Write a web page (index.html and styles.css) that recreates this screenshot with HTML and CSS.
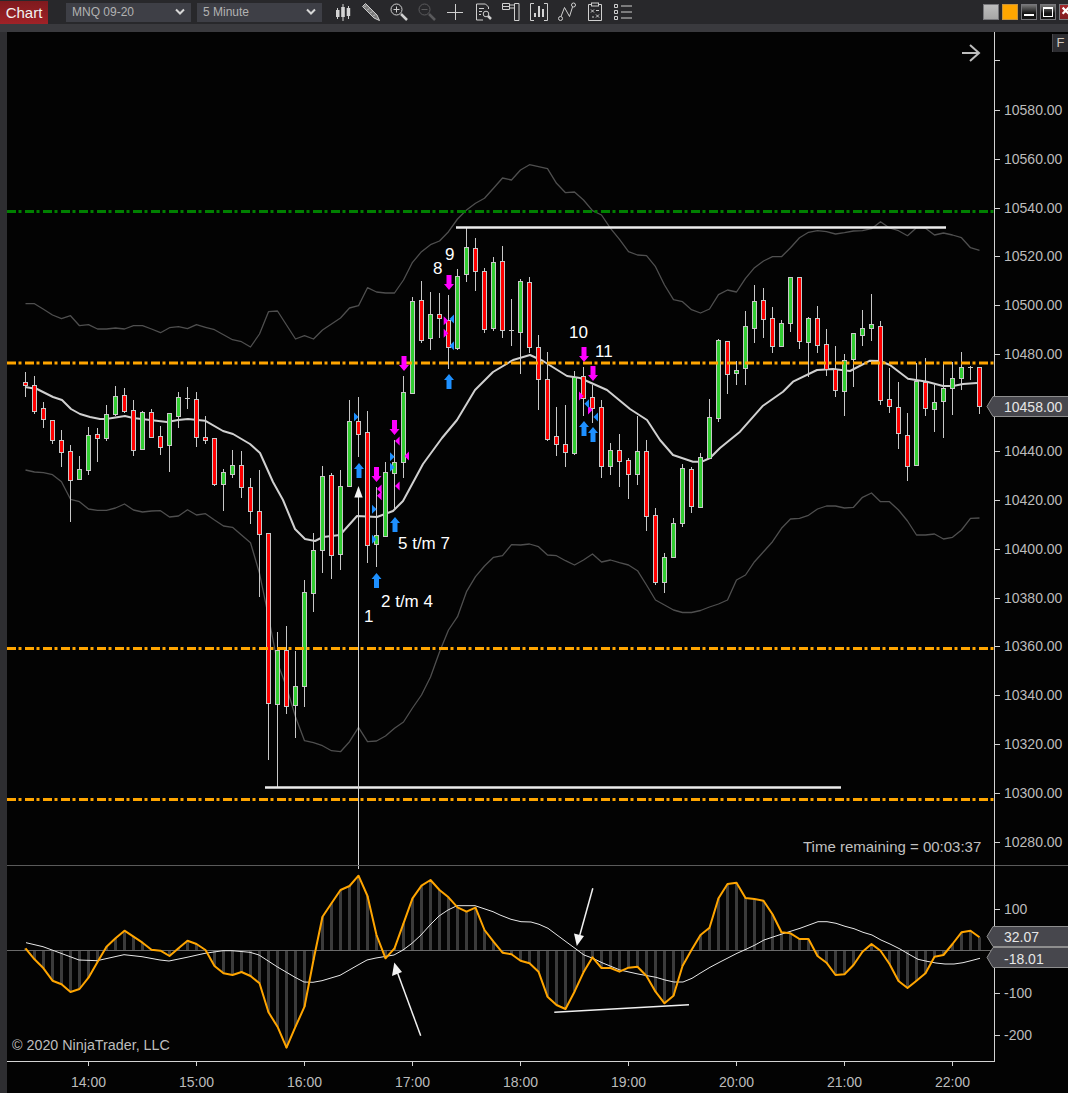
FILE: index.html
```html
<!DOCTYPE html>
<html lang="en">
<head>
<meta charset="UTF-8">
<meta name="viewport" content="width=device-width, initial-scale=1.0">
<title>Chart</title>
<link rel="stylesheet" href="styles.css">
</head>
<body>

<div class="toolbar">
    <div class="tab">Chart</div>
    <div class="picker">
        <span>MNQ 09-20</span>
        <svg width="10" height="8" viewBox="0 0 10 8"><polyline class="chevron" points="1,1.5 5,5.5 9,1.5"/></svg>
    </div>
    <div class="picker">
        <span>5 Minute</span>
        <svg width="10" height="8" viewBox="0 0 10 8"><polyline class="chevron" points="1,1.5 5,5.5 9,1.5"/></svg>
    </div>

    <div class="tools">
        <!-- candles -->
        <svg class="tool" viewBox="0 0 20 20">
            <path class="ink" d="M4.5 6v11M10 2v17M15.5 4v13"/>
            <rect class="solid" x="3" y="8" width="3.5" height="7"/>
            <rect class="solid" x="8.2" y="5" width="3.6" height="10"/>
            <rect class="solid" x="13.7" y="6" width="3.5" height="8"/>
        </svg>
        <!-- pencil -->
        <svg class="tool" viewBox="0 0 20 20">
            <path class="pencil" d="M1.5 4.5L4.5 1.5L16 13L18.5 18.5L13 16Z"/>
            <path class="ink" d="M5 3.5L3.500 5M8 6.5L6.5 8M11 9.5L9.5 11M14 12.5L12.5 14"/>
        </svg>
        <!-- zoom in -->
        <svg class="tool" viewBox="0 0 20 20">
            <circle class="ink" cx="7.5" cy="7.5" r="5.5"/>
            <path class="ink" d="M4.5 7.5h6M7.5 4.5v6"/>
            <path class="handle" d="M12 12L18 18"/>
        </svg>
        <!-- zoom out, disabled -->
        <svg class="tool off" viewBox="0 0 20 20">
            <circle class="ink" cx="7.5" cy="7.5" r="5.5"/>
            <path class="ink" d="M4.5 7.5h6"/>
            <path class="handle" d="M12 12L18 18"/>
        </svg>
        <!-- crosshair -->
        <svg class="tool" viewBox="0 0 20 20">
            <path class="ink" d="M2 10.5h16M10.5 2v16"/>
        </svg>
        <!-- doc and lens -->
        <svg class="tool" viewBox="0 0 20 20">
            <path class="ink" d="M15.5 7V5L12.5 2H3.5V18H10"/>
            <path class="ink" d="M6 6.5h5M6 9.5h3M6 12.5h2"/>
            <circle class="ink" cx="13" cy="12" r="2.8"/>
            <path class="handle" d="M15 14L18 17"/>
        </svg>
        <!-- data series tree -->
        <svg class="tool" viewBox="0 0 20 20">
            <path class="ink" d="M1.5 1.5h7v3h-7zM1.5 4.5h7v3h-7zM8.5 3h5M8.5 6h5"/>
            <path class="ink" d="M13.5 1.5h4.5v17h-4.500z"/>
        </svg>
        <!-- framed bars -->
        <svg class="tool" viewBox="0 0 20 20">
            <path class="ink" d="M5 1.5H1.5V18.5H5M15 1.5H18.5V18.5H15"/>
            <path class="solid-line" d="M6 15v-4M10 15V4M14 15V7"/>
        </svg>
        <!-- nodes -->
        <svg class="tool" viewBox="0 0 20 20">
            <path class="ink" d="M4 14.5L7.5 5.5L12.5 14.5L15.5 5"/>
            <circle class="ink" cx="3.5" cy="16.5" r="2"/>
            <circle class="ink" cx="16.5" cy="3" r="2"/>
        </svg>
        <!-- sheet -->
        <svg class="tool" viewBox="0 0 20 20">
            <path class="ink" d="M6 2.5H3.5V18.5H16.5V2.5H14"/>
            <rect class="ink" x="6.5" y="1" width="7" height="3"/>
            <path class="ink" d="M6 7.5l3 3M9 7.5l-3 3M11 12.5l3 3M14 12.5l-3 3M7 15h2M11 8.5h3"/>
        </svg>
        <!-- list -->
        <svg class="tool" viewBox="0 0 20 20">
            <path class="ink" d="M1.5 2.5h3v3h-3zM1.5 8.5h3v3h-3zM1.5 14.5h3v3h-3zM8 4h11M8 10h11M8 16h11"/>
        </svg>
    </div>

    <div class="window-btns">
        <div class="win win-grey"></div>
        <div class="win win-orange"></div>
        <div class="win win-dark"><span class="win-min"></span></div>
        <div class="win win-dark"><span class="win-max"></span></div>
        <div class="win win-close">
            <svg width="16" height="16" viewBox="0 0 16 16"><path class="close-x" d="M3 3L10 10M10 3L3 10"/></svg>
        </div>
    </div>
</div>

<div class="strip"></div>

<div class="main">
    <div class="gutter"></div>
    <div class="panel">
        <svg id="chart" width="1061" height="1061" viewBox="7 32 1061 1061"></svg>
        <div class="flag">F</div>
    </div>
</div>

<script src="chart.js"></script>

</body>
</html>
```

FILE: styles.css
```css
html, body {
    margin: 0;
    padding: 0;
    height: 100%;
    overflow: hidden;
    background-color: #2e2e31;
    font-family: "Liberation Sans", Arial, sans-serif;
}

.toolbar {
    display: flex;
    align-items: center;
    height: 24px;
    background-color: #28282b;
    overflow: hidden;
}

.tab {
    flex: none;
    width: 48px;
    height: 23px;
    margin-top: 1px;
    line-height: 24px;
    text-align: center;
    font-size: 15px;
    color: #f2f2f2;
    background: linear-gradient(#7e1a1e, #a02227);
}

.picker {
    flex: none;
    display: flex;
    align-items: center;
    justify-content: space-between;
    box-sizing: border-box;
    width: 125px;
    height: 19px;
    margin-left: 6px;
    padding: 0 6px;
    font-size: 12px;
    color: #b2b2b2;
    background-color: #3e3f46;
}

.tab + .picker {
    margin-left: 18px;
}

.chevron {
    fill: none;
    stroke: #d6d6d6;
    stroke-width: 2;
}

.tools {
    display: flex;
    gap: 8px;
    margin-left: 11px;
}

.tool {
    flex: none;
    width: 20px;
    height: 20px;
}

.ink {
    fill: none;
    stroke: #cfcfcf;
    stroke-width: 1;
}

.pencil {
    fill: #7c7c7c;
    stroke: #cfcfcf;
    stroke-width: 1;
}

.solid {
    fill: #d4d4d4;
}

.solid-line {
    fill: none;
    stroke: #d4d4d4;
    stroke-width: 2;
}

.handle {
    fill: none;
    stroke: #cfcfcf;
    stroke-width: 2.5;
}

.off .ink, .off .handle {
    stroke: #5a5a5c;
}

.window-btns {
    display: flex;
    gap: 3px;
    margin-left: auto;
    margin-right: -7px;
}

.win {
    flex: none;
    display: flex;
    align-items: center;
    justify-content: center;
    box-sizing: border-box;
    width: 16px;
    height: 16px;
    border: 1px solid #77777b;
}

.win-grey {
    background: linear-gradient(#bdbdbd, #a6a6a6);
}

.win-orange {
    background-color: #ffa600;
    border-color: #c8933a;
}

.win-dark {
    background: linear-gradient(#777, #141414 60%);
}

.win-min {
    width: 10px;
    height: 2px;
    margin-top: 6px;
    background-color: #fff;
}

.win-max {
    box-sizing: border-box;
    width: 10px;
    height: 10px;
    border: 1px solid #fff;
    border-top-width: 2px;
}

.win-close {
    background: linear-gradient(#a5282c, #7f1d21);
    justify-content: flex-start;
}

.close-x {
    fill: none;
    stroke: #fff;
    stroke-width: 2.5;
}

.strip {
    height: 8px;
    background-color: #3a3a3e;
}

.main {
    display: flex;
    height: 1061px;
}

.gutter {
    flex: none;
    width: 7px;
    background-color: #2e2e31;
}

.panel {
    position: relative;
    flex: none;
    width: 1061px;
    height: 1061px;
    background-color: #030303;
}

#chart {
    display: block;
}

.flag {
    position: absolute;
    top: 2px;
    right: 0;
    width: 15px;
    height: 18px;
    line-height: 18px;
    text-align: center;
    font-size: 13px;
    color: #cfc6bc;
    background-color: #2d2d31;
    border-left: 1px solid #4a4a4e;
}

/* chart parts */
.axis {
    stroke: #d2d2d2;
    stroke-width: 1;
    shape-rendering: crispEdges;
}

.split {
    stroke: #5a5a5a;
    stroke-width: 1;
    shape-rendering: crispEdges;
}

.zero {
    stroke: #6a6a6a;
    stroke-width: 1;
    shape-rendering: crispEdges;
}

.band {
    fill: none;
    stroke: #4f4f4f;
    stroke-width: 1.3;
    stroke-linejoin: round;
}

.mid {
    fill: none;
    stroke: #d0d0d0;
    stroke-width: 2;
    stroke-linejoin: round;
}

.macd {
    fill: none;
    stroke: #ffa500;
    stroke-width: 2;
    stroke-linejoin: round;
}

.signal {
    fill: none;
    stroke: #e8e8e8;
    stroke-width: 1;
    stroke-linejoin: round;
}

.hist {
    fill: #3b3b3b;
}

.wick {
    fill: #c8c8c8;
}

.body-up, .body-down {
    stroke: #c8c8c8;
    stroke-width: 1;
}

.body-up {
    fill: #32cd32;
}

.body-down {
    fill: #ff0000;
}

.level {
    fill: none;
    stroke-width: 3;
    stroke-dasharray: 9 2.5 3 3.5;
}

.level-orange {
    stroke: #ffa500;
}

.level-green {
    stroke: #008000;
}

.drawn {
    stroke: #ececec;
    stroke-width: 2.5;
}

.thin {
    stroke: #f0f0f0;
    stroke-width: 1.5;
}

.head {
    fill: #f4f4f4;
}

.blue {
    fill: #1e90ff;
}

.pink {
    fill: #ff00ff;
}

.price, .clock, .note, .stamp, .remain, .tag {
    font-family: "Liberation Sans", Arial, sans-serif;
    font-size: 14px;
}

.price, .clock {
    fill: #bcbcbc;
}

.clock {
    text-anchor: middle;
}

.stamp {
    font-size: 14.3px;
    fill: #bdbdbd;
}

.remain {
    font-size: 15px;
    fill: #c0c0c0;
}

.note {
    font-size: 17px;
    fill: #ffffff;
}

.tag {
    fill: #e6e6e6;
}

.tag-box {
    fill: #47474d;
    stroke: #8e8e8e;
    stroke-width: 1;
}

.next {
    fill: none;
    stroke: #bdbdbd;
    stroke-width: 2;
}
```

FILE: chart.js
```javascript
const svg = document.getElementById("chart");
const NS = "http://www.w3.org/2000/svg";

function add(tag, attrs, text) {
    let el = document.createElementNS(NS, tag);
    for (let key in attrs) {
        el.setAttribute(key, attrs[key]);
    }
    if (text !== undefined) {
        el.textContent = text;
    }
    svg.appendChild(el);
    return el;
}

function barX(k) {
    return 25.5 + 9 * k;
}

function line(x1, y1, x2, y2, cls) {
    add("line", { x1: x1, y1: y1, x2: x2, y2: y2, class: cls });
}

function polyline(points, cls) {
    add("polyline", { points: points.map(p => p.join(",")).join(" "), class: cls });
}

function barSeries(ys) {
    return ys.map((y, k) => [barX(k), y]);
}

// wick top, body top, body bottom, wick bottom, direction
const candles = [
    [372, 382, 385, 397, "d"], [376, 385, 411, 414, "d"], [402, 408, 419, 428, "d"], [420, 420, 440, 444, "d"],
    [430, 440, 452, 467, "d"], [445, 451, 480, 522, "d"], [456, 469, 479, 479, "u"], [427, 435, 470, 475, "u"],
    [428, 434, 438, 462, "d"], [405, 414, 438, 441, "u"], [386, 396, 414, 416, "u"], [388, 395, 411, 413, "d"],
    [400, 410, 450, 456, "d"], [411, 412, 449, 450, "u"], [409, 412, 437, 438, "d"], [426, 436, 447, 455, "d"],
    [413, 413, 445, 472, "u"], [392, 397, 416, 428, "u"], [387, 398, 399, 409, "l"], [392, 399, 437, 447, "d"],
    [416, 437, 440, 444, "d"], [438, 438, 484, 486, "d"], [469, 472, 484, 511, "u"], [450, 465, 474, 478, "u"],
    [451, 465, 487, 498, "d"], [478, 487, 511, 524, "d"], [470, 511, 534, 597, "d"], [533, 533, 703, 760, "d"],
    [632, 650, 704, 788, "u"], [626, 650, 706, 714, "d"], [651, 686, 705, 738, "u"], [580, 592, 686, 707, "u"],
    [533, 550, 593, 612, "u"], [466, 476, 550, 573, "u"], [473, 475, 555, 579, "d"], [470, 486, 554, 570, "u"],
    [400, 421, 486, 486, "u"], [397, 421, 434, 457, "d"], [411, 432, 545, 563, "d"], [487, 535, 544, 567, "u"],
    [462, 472, 536, 536, "u"], [440, 462, 473, 510, "u"], [376, 392, 462, 478, "u"], [297, 301, 393, 393, "u"],
    [281, 300, 340, 343, "d"], [292, 314, 338, 350, "u"], [293, 314, 318, 338, "d"], [295, 320, 347, 369, "d"],
    [269, 276, 348, 350, "u"], [228, 247, 274, 282, "u"], [238, 248, 271, 291, "d"], [268, 271, 329, 333, "d"],
    [257, 262, 328, 331, "u"], [246, 261, 330, 338, "d"], [299, 330, 332, 346, "l"], [279, 281, 332, 374, "u"],
    [277, 282, 347, 353, "d"], [335, 347, 379, 410, "d"], [352, 379, 439, 441, "d"], [407, 436, 444, 456, "d"],
    [405, 444, 452, 467, "d"], [371, 377, 453, 455, "u"], [367, 376, 398, 416, "d"], [385, 397, 408, 423, "d"],
    [400, 407, 466, 478, "d"], [443, 450, 466, 475, "u"], [434, 450, 461, 487, "d"], [458, 460, 474, 499, "d"],
    [416, 451, 474, 485, "u"], [440, 451, 516, 531, "d"], [508, 515, 582, 585, "d"], [553, 557, 582, 593, "u"],
    [518, 523, 557, 558, "u"], [464, 468, 523, 527, "u"], [467, 469, 506, 513, "d"], [453, 457, 507, 507, "u"],
    [399, 417, 458, 458, "u"], [339, 340, 418, 422, "u"], [341, 341, 374, 394, "d"], [361, 370, 373, 385, "u"],
    [311, 326, 368, 385, "u"], [285, 301, 328, 343, "u"], [288, 300, 319, 338, "d"], [307, 318, 346, 353, "d"],
    [320, 323, 346, 347, "u"], [277, 277, 323, 332, "u"], [277, 277, 341, 349, "d"], [317, 318, 342, 377, "u"],
    [306, 318, 345, 353, "d"], [329, 344, 369, 376, "d"], [346, 369, 390, 397, "d"], [354, 360, 391, 416, "u"],
    [333, 333, 359, 387, "u"], [310, 328, 335, 346, "u"], [294, 324, 328, 341, "u"], [321, 326, 400, 405, "d"],
    [368, 399, 406, 413, "d"], [382, 407, 433, 449, "d"], [413, 435, 466, 481, "d"], [363, 381, 465, 466, "u"],
    [358, 382, 408, 416, "d"], [385, 402, 409, 432, "u"], [364, 388, 401, 438, "u"], [362, 378, 388, 415, "u"],
    [352, 367, 378, 390, "u"], [366, 367, 368, 380, "l"], [367, 367, 406, 414, "d"]
];

const upper = [
    303.7, 303.7, 309.3, 315, 318.7, 315.7, 325.7, 324.7, 329, 329, 328, 329, 325.7, 325.7, 329, 332.7, 327.7, 326.7,
    328.7, 324.7, 327.3, 329.7, 334.7, 339.7, 341.7, 347, 334, 311.7, 311, 325, 339, 335.7, 339, 330, 324, 318, 308,
    305.7, 287.7, 292, 293, 293, 280, 262.3, 251.7, 244.7, 241, 231.7, 219, 210, 203.3, 198.3, 188.3, 178, 180, 170,
    164.7, 166.7, 168.7, 183.3, 192.7, 192, 200, 210.7, 215, 228.3, 239.3, 251.7, 255, 255.7, 266.7, 285, 299.7, 301.7,
    309.7, 313, 309, 294.7, 290, 292, 278.3, 267.7, 261, 256.7, 256.7, 247.7, 237.7, 232.3, 230.7, 231.7, 234, 232.7,
    231, 230.7, 228.7, 221.7, 228, 230.7, 235.7, 227.7, 228.3, 235, 233, 235, 237.7, 247.7, 250.3
];

const lower = [
    470, 472, 472.7, 474.7, 481.7, 499.3, 501.7, 509, 510.3, 510.3, 508, 504, 510, 512, 511, 510.7, 517, 516, 509.7,
    515, 513.7, 520, 526, 527.3, 535, 542.7, 573.3, 616.7, 663, 687, 716.7, 740.7, 742.7, 745.7, 750.7, 751.7, 741.7,
    727.3, 741.7, 741, 736, 728.3, 722, 708, 695, 677, 652, 630, 616.7, 591.7, 576.7, 566, 557.3, 555.7, 544.7, 545,
    544, 546.7, 555, 555.7, 560.7, 565, 560, 554, 562, 560, 562.7, 565, 570.7, 585, 600, 605, 610, 612.5, 612.5, 610.5,
    607, 604, 600, 580, 575, 561.7, 551.7, 541.7, 528.3, 519, 518.3, 515.3, 509, 506, 506, 508, 507.3, 497.3, 493,
    501.7, 501.7, 510, 521, 535, 535, 534, 539, 537.3, 530, 518.3, 518
];

const mid = [
    [25, 387], [37, 389], [53, 397], [62, 400], [71, 409], [80, 414], [90, 417], [100, 419], [106, 419], [125, 416],
    [133, 418], [150, 420], [167, 422], [178, 420], [188, 419], [205, 420.7], [223, 431], [233, 434], [250, 444],
    [260, 453], [273, 482], [283, 500], [295, 529], [305, 539], [315, 541], [323, 537], [340, 535], [357, 516],
    [377, 517], [393, 511], [403, 501], [423, 464], [442, 438], [457, 420], [475, 390], [493, 372], [513, 360],
    [530, 355], [543, 361], [567, 376], [580, 378], [607, 390], [620, 400.7], [630, 409], [647, 420], [660, 440],
    [673, 455], [693, 461.7], [702, 461.7], [710, 458], [720, 448], [740, 431.7], [763, 405.7], [783, 391.7],
    [793, 381.7], [817, 370], [833, 369], [850, 371], [870, 360.7], [880, 361], [890, 365], [908, 378.7],
    [927, 381.7], [943, 386], [953, 386], [963, 384], [977, 383]
];

const macd = [
    948.3, 959.3, 968.3, 980.7, 984.3, 992, 989, 977.7, 962, 946.7, 938.3, 930.7, 936.7, 942.7, 949.7, 950.7, 956,
    948.3, 940.7, 944, 950, 966, 973.3, 975, 972, 976, 983.3, 1012.3, 1026.7, 1047.7, 1026.7, 1006.7, 960, 916.7,
    903.3, 890, 886, 875.7, 896, 935, 958.3, 948.3, 923.3, 898.3, 885.7, 880, 890, 897.3, 907.3, 911.7, 907.7, 930,
    941.7, 952.7, 954.3, 960.7, 963.3, 971.7, 996.7, 1005, 1009, 991.7, 972.3, 957.3, 968, 968, 971.7, 967.7, 966.7,
    976, 991.7, 1003.3, 995.7, 966, 950, 935, 927.7, 898.3, 884, 882.7, 898, 899, 900.7, 914.3, 932.3, 933.3, 939,
    939, 956, 962.7, 975, 974.3, 965, 951.7, 944, 950.7, 964, 981, 988, 980.7, 973.3, 956.7, 955, 944, 932.3, 930.7,
    937.3
];

const signal = [
    [26, 942.7], [43, 946.7], [61, 953.3], [79, 960], [97, 960.7], [115, 956.7], [124, 954.7], [142, 956.7], [160, 960],
    [169, 961], [187, 957.3], [205, 953.3], [223, 950.7], [232, 950.7], [250, 952.3], [259, 955], [277, 966.7],
    [295, 977.3], [304, 982], [313, 982.3], [322, 980.7], [340, 975.3], [358, 965], [367, 960], [376, 958], [394, 955],
    [403, 950], [412, 943.3], [421, 935], [430, 925], [439, 916], [448, 910], [457, 905.7], [475, 905.7], [493, 911.7],
    [500, 915], [511, 919.3], [521, 921.7], [531, 922], [539, 924.3], [548, 928.3], [557, 935], [566, 941.7],
    [575, 948.3], [584, 955], [593, 958.3], [602, 962.7], [620, 970], [638, 974], [656, 977.3], [665, 980], [674, 982],
    [683, 982], [692, 978.3], [701, 972.7], [710, 967.3], [720, 962], [737, 953.3], [746, 949.3], [755, 945], [764, 940],
    [782, 934], [800, 928.3], [809, 925], [818, 921.7], [827, 921.7], [836, 923.3], [845, 926.3], [854, 928.7],
    [863, 932.3], [872, 935], [881, 940], [890, 944], [900, 949], [909, 954.3], [918, 959.3], [927, 961.3], [936, 963],
    [945, 964], [954, 964], [963, 962.7], [971, 960.7], [980, 958.3]
];

// bands and average go under the candles
polyline(barSeries(upper), "band");
polyline(barSeries(lower), "band");
polyline(mid, "mid");

candles.forEach(function(c, k) {
    let x = 25 + 9 * k;
    add("rect", { x: x, y: c[0], width: 1, height: c[3] - c[0], class: "wick" });
    let cls = c[4] === "d" ? "body-down" : "body-up";
    if (c[4] === "l") {
        add("rect", { x: x - 2, y: c[1], width: 5, height: 1, class: "wick" });
    } else {
        add("rect", { x: x - 1.5, y: c[1] + 0.5, width: 4, height: c[2] - c[1], class: cls });
    }
});

// levels
[363, 648.5, 799.5].forEach(function(y) {
    line(7, y, 994, y, "level level-orange");
});
line(7, 211.5, 994, 211.5, "level level-green");

// drawn lines
line(456, 227.5, 946, 227.5, "drawn");
line(265, 787.5, 841, 787.5, "drawn");

// entry marker
line(358.5, 495, 358.5, 869, "axis");
add("polygon", { points: "358.5,486 362.7,497.5 354.3,497.5", class: "head" });

// arrows: [x, top]
function upArrow(x, t) {
    let p = [[x, t], [x + 5, t + 6], [x + 2.5, t + 6], [x + 2.5, t + 15], [x - 2.5, t + 15], [x - 2.5, t + 6], [x - 5, t + 6]];
    add("polygon", { points: p.map(q => q.join(",")).join(" "), class: "blue" });
}

function downArrow(x, t) {
    let p = [[x - 2.5, t], [x + 2.5, t], [x + 2.5, t + 9], [x + 5, t + 9], [x, t + 15], [x - 5, t + 9], [x - 2.5, t + 9]];
    add("polygon", { points: p.map(q => q.join(",")).join(" "), class: "pink" });
}

[[359, 463], [376.5, 573], [395, 517], [449, 374], [584, 421], [593, 427]].forEach(a => upArrow(a[0], a[1]));
[[376.5, 467], [394.5, 420], [404, 356], [449, 275], [584, 347], [593, 366]].forEach(a => downArrow(a[0], a[1]));

// small triangles: dir 1 points right, -1 left
function tri(x, y, dir, cls) {
    let p = (x - 2.3 * dir) + "," + (y - 4.5) + " " + (x + 2.3 * dir) + "," + y + " " + (x - 2.3 * dir) + "," + (y + 4.5);
    add("polygon", { points: p, class: cls });
}

[[356.3, 417], [374.3, 509.3], [374.3, 539.3], [392.3, 456.7], [392.3, 467.3]].forEach(t => tri(t[0], t[1], 1, "blue"));
[[379.3, 489], [379.3, 495.7], [397.3, 441], [397.3, 486], [406.7, 456]].forEach(t => tri(t[0], t[1], -1, "pink"));
[[446, 320.7], [446, 333.3], [581.3, 396], [590.3, 410]].forEach(t => tri(t[0], t[1], 1, "pink"));
[[451.7, 319], [451.7, 345.7], [586.7, 403.7], [595.7, 417]].forEach(t => tri(t[0], t[1], -1, "blue"));

// trade notes
[
    ["1", 364, 621.7], ["2 t/m 4", 381, 606.7], ["5 t/m 7", 398, 549], ["8", 433, 274.3],
    ["9", 445, 260], ["10", 569, 337.7], ["11", 595, 357]
].forEach(function(n) {
    add("text", { x: n[1], y: n[2], class: "note" }, n[0]);
});

add("text", { x: 803, y: 852, class: "remain" }, "Time remaining = 00:03:37");

// right hand arrow
add("path", { d: "M962 53H979M970 45L979 53L970 61", class: "next" });

// oscillator panel
line(7, 865.5, 1068, 865.5, "split");

macd.forEach(function(y, k) {
    let top = Math.min(y, 950);
    add("rect", { x: barX(k) - 1.5, y: top, width: 3, height: Math.abs(y - 950), class: "hist" });
});
line(7, 950.5, 994, 950.5, "zero");
polyline(signal, "signal");
polyline(barSeries(macd), "macd");

// trader's marks on the oscillator
line(420.7, 1035.7, 396.5, 970, "thin");
add("polygon", { points: "394.3,962.5 402,972 392,976", class: "head" });
line(592.8, 888.3, 579, 938, "thin");
add("polygon", { points: "576.8,946 574,933.5 584,936", class: "head" });
line(554.3, 1012.3, 689, 1004.7, "thin");

add("text", { x: 12, y: 1050, class: "stamp" }, "\u00a9 2020 NinjaTrader, LLC");

// axes
line(994.5, 32, 994.5, 1061.5, "axis");
line(7, 1061.5, 994.5, 1061.5, "axis");

line(995, 60.5, 1000, 60.5, "axis");
for (let i = 0; i < 16; i++) {
    let y = Math.round(110 + i * 48.77);
    line(995, y + 0.5, 1000, y + 0.5, "axis");
    // 10460 sits under the last price tag
    if (i !== 6) {
        add("text", { x: 1004, y: y + 5, class: "price" }, (10580 - i * 20) + ".00");
    }
}

[[100, 909], [-100, 993], [-200, 1035]].forEach(function(t) {
    line(995, t[1] + 0.5, 1000, t[1] + 0.5, "axis");
    add("text", { x: 1004, y: t[1] + 5, class: "price" }, String(t[0]));
});

for (let h = 14; h <= 22; h++) {
    let x = 88.5 + (h - 14) * 108;
    line(x, 1061, x, 1066, "axis");
    add("text", { x: x, y: 1087, class: "clock" }, h + ":00");
}

// value tags on the axis
function valueTag(top, bottom, baseline, text) {
    let mid = (top + bottom) / 2;
    let pts = "987," + mid + " 993," + top + " 1070," + top + " 1070," + bottom + " 993," + bottom;
    add("polygon", { points: pts, class: "tag-box" });
    add("text", { x: 1004, y: baseline, class: "tag" }, text);
}

valueTag(396.5, 416.5, 411.5, "10458.00");
valueTag(926.5, 946.5, 942, "32.07");
valueTag(947.5, 967.5, 964, "-18.01");
```
